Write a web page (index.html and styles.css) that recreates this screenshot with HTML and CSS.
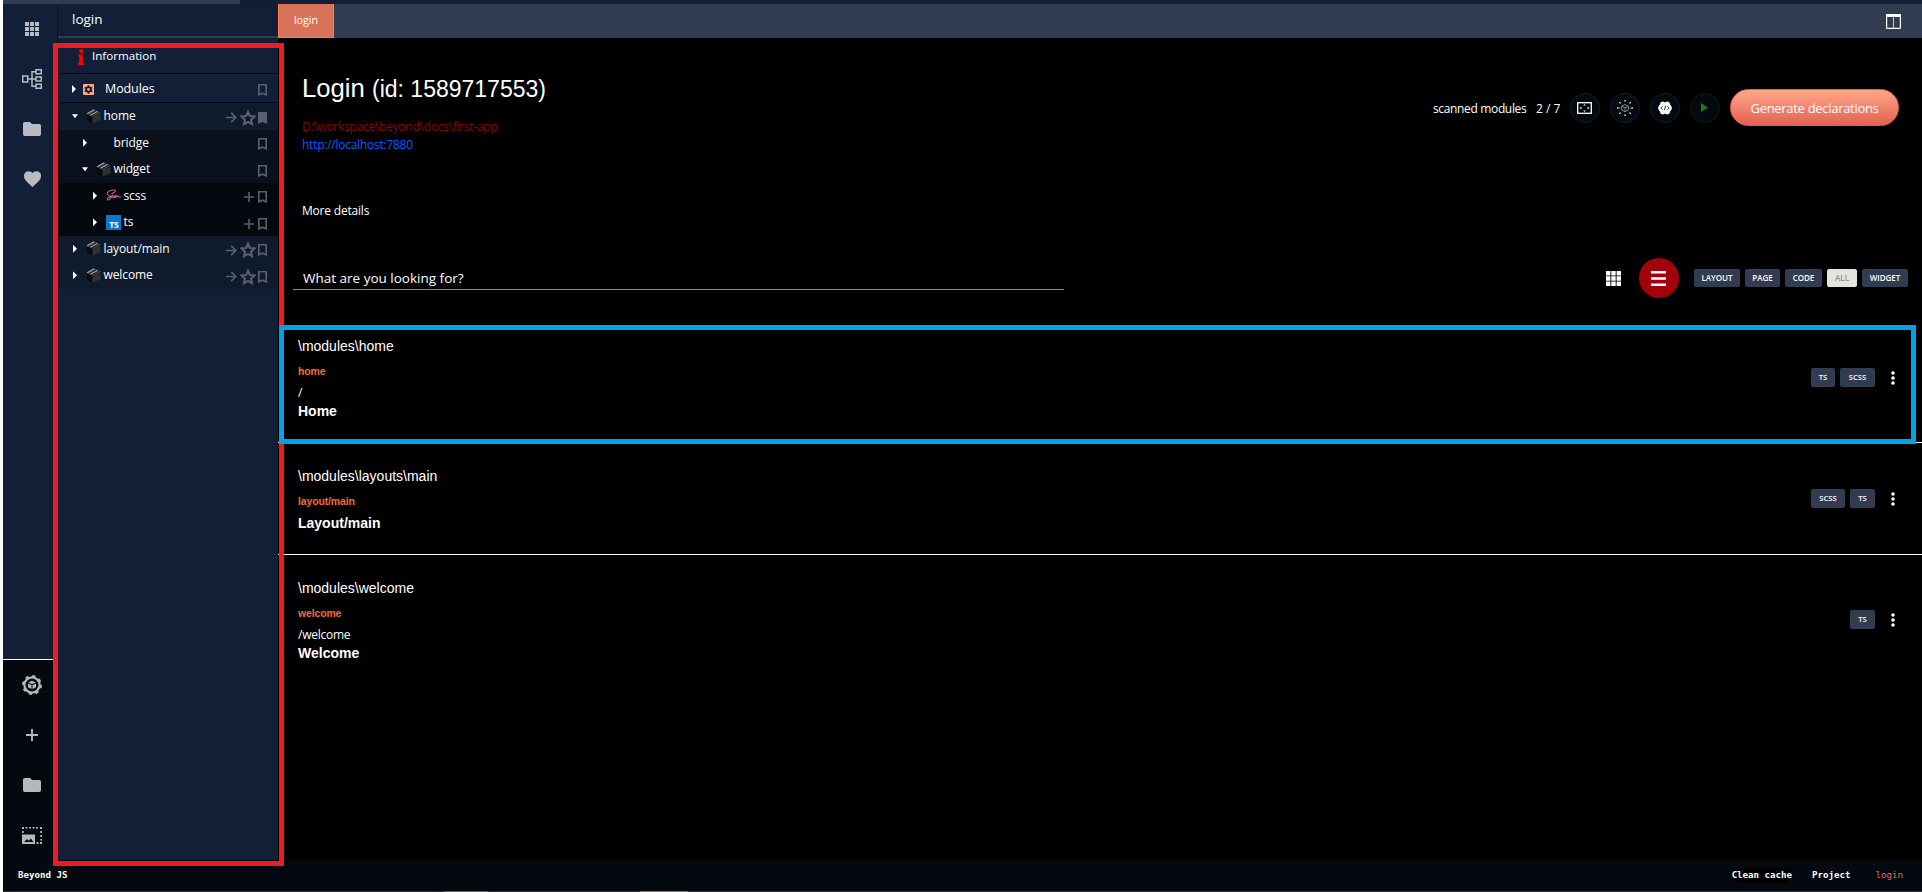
FILE: index.html
```html
<!DOCTYPE html>
<html lang="en">
<head>
<meta charset="utf-8">
<title>login</title>
<link rel="stylesheet" href="styles.css">
</head>
<body>
<svg class="defs" width="0" height="0">
  <symbol id="box" viewBox="0 0 16 16"><path fill="#0a0a0b" d="M1 5.500l6 2.500v7.500l-6-3z"/><path fill="#303032" d="M7 8l8.500-2.500V12L7 15.500z"/><path fill="#666" d="M.5 5l8-4.500 7 3.500L7 8z"/><path stroke="#111" stroke-width="1.100" fill="none" d="M3 6.300L11 1.800M6.200 7.300l7.500-4"/><path stroke="#a5a5a5" stroke-width="1" fill="none" d="M1 5l7.500-4.300M4.700 6.500l7.500-4"/></symbol>
  <symbol id="mark" viewBox="0 0 9 12"><path fill="none" stroke="currentColor" stroke-width="1.600" d="M.8.8h7.400v10L4.500 9.200.8 10.800z"/></symbol>
  <symbol id="markfull" viewBox="0 0 9 12"><path fill="currentColor" d="M0 0h9v12L4.500 10 0 12z"/></symbol>
  <symbol id="star" viewBox="0 0 16 16"><path fill="none" stroke="currentColor" stroke-width="2.100" d="M8 1.800l1.900 4.200 4.600.5-3.400 3.100.9 4.600-4-2.300-4 2.300.9-4.600-3.400-3.100 4.600-.5z"/></symbol>
  <symbol id="arrow" viewBox="0 0 11 11"><path fill="none" stroke="currentColor" stroke-width="1.600" d="M0 5.500h9.800M5.200.9l4.600 4.600-4.600 4.600"/></symbol>
  <symbol id="plus" viewBox="0 0 10 10"><path fill="none" stroke="currentColor" stroke-width="1.600" d="M5 0v10M0 5h10"/></symbol>
  <symbol id="folder" viewBox="0 0 18 14"><path fill="currentColor" d="M1.800 0h5.200l2 2h7.200A1.800 1.800 0 0 1 18 3.800v8.400a1.800 1.800 0 0 1-1.800 1.800H1.800A1.800 1.800 0 0 1 0 12.200V1.800A1.800 1.800 0 0 1 1.800 0z"/></symbol>
  <symbol id="dots" viewBox="0 0 4 14"><g fill="#fff"><circle cx="2" cy="2" r="1.800"/><circle cx="2" cy="7" r="1.800"/><circle cx="2" cy="12" r="1.800"/></g></symbol>
</svg>
<div class="app">
  <div class="progress"><div class="progress-bar"></div></div>
  <div class="main">
    <nav class="rail">
      <div class="rail-top">
        <a class="rail-item"><svg width="14" height="14" viewBox="0 0 14 14" fill="currentColor"><path d="M0 0h4v4H0zM5 0h4v4H5zM10 0h4v4h-4zM0 5h4v4H0zM5 5h4v4H5zM10 5h4v4h-4zM0 10h4v4H0zM5 10h4v4H5zM10 10h4v4h-4z"/></svg></a>
        <a class="rail-item"><svg width="20" height="20" viewBox="0 0 20 20" fill="none" stroke="currentColor" stroke-width="1.500"><path d="M.7 7h5v6h-5zM14 .7h5.300v4H14zM14 8h5.300v4H14zM14 15.300h5.300v4H14zM6 10h8M14 2.700h-4v14.600h4"/></svg></a>
        <a class="rail-item"><svg width="18" height="14"><use href="#folder"/></svg></a>
        <a class="rail-item"><svg width="17" height="16" viewBox="0 0 17 16" fill="currentColor"><path d="M8.500 16L7.300 14.900C3 11 0 8.300 0 4.900A4.500 4.500 0 0 1 4.600.2c1.500 0 3 .7 3.900 1.900C9.400.9 10.900.2 12.400.2A4.500 4.500 0 0 1 17 4.900c0 3.400-3 6.100-7.300 10z"/></svg></a>
      </div>
      <div class="rail-bottom">
        <a class="rail-item"><svg width="20" height="20" viewBox="0 0 20 20"><circle cx="10" cy="10" r="7.600" fill="none" stroke="currentColor" stroke-width="2.200"/><circle cx="10" cy="10" r="9" fill="none" stroke="currentColor" stroke-width="2" stroke-dasharray="3.200 3.870"/><path fill="currentColor" d="M10 5.800l3.800 1.600L10 9 6.200 7.400zM6 8.400l3.500 1.500v4L6 12.300zM14 8.400l-3.500 1.500v4l3.500-1.600z"/></svg></a>
        <a class="rail-item"><svg width="12" height="12" viewBox="0 0 12 12"><path stroke="currentColor" stroke-width="1.900" d="M6 0v12M0 6h12"/></svg></a>
        <a class="rail-item"><svg width="18" height="14"><use href="#folder"/></svg></a>
        <a class="rail-item"><svg width="20" height="17" viewBox="0 0 20 17" fill="currentColor"><path d="M0 0h2v2H0zM3.500 0h2v1.600h-2zM7 0h2v1.600H7zM10.500 0h2v1.600h-2zM14 0h2v1.600h-2zM18 0h2v2h-2zM0 4h1.700v2H0zM18.300 4H20v2h-1.700zM18.300 8H20v2h-1.700zM18.300 12H20v1.500h-1.700zM18 15h2v2h-2zM14.500 15h2v2h-2z"/><path fill-rule="evenodd" d="M0 7.500h13V17H0zM2 15h9.500L8.800 11.500l-2 2.300L5 12z"/></svg></a>
      </div>
    </nav>
    <aside class="side">
      <header class="side-head">login</header>
      <div class="info"><svg width="6" height="16" viewBox="0 0 6 16" fill="#f00"><circle cx="3.300" cy="2.200" r="2.100"/><path d="M.3 5.500h4.500V14H6v2H0v-2h1.200V7.500H.3z"/></svg><span>Information</span></div>
      <div class="row modules"><i class="tri"></i><svg class="mod" width="11" height="11" viewBox="0 0 11 11"><rect width="11" height="11" rx="1" fill="#ffa789"/><circle cx="5.500" cy="5.500" r="2.300" fill="none" stroke="#14192a" stroke-width="1.800"/><path stroke="#14192a" stroke-width="1.500" d="M5.500 1.300v1.500M5.500 8.200v1.500M1.700 3.500l1.500.8M9.300 3.500l-1.500.8M1.700 7.500l1.500-.8M9.300 7.500l-1.500-.8"/></svg><span class="label">Modules</span><svg class="act" width="9" height="12"><use href="#mark"/></svg></div>
      <div class="row l1"><i class="tri down"></i><svg class="pic" width="15" height="15"><use href="#box"/></svg><span class="label">home</span><svg class="act" width="11" height="11"><use href="#arrow"/></svg><svg class="act" width="16" height="16"><use href="#star"/></svg><svg class="act" width="9" height="12"><use href="#markfull"/></svg></div>
      <div class="row l2"><i class="tri"></i><i class="pic"></i><span class="label">bridge</span><svg class="act" width="9" height="12"><use href="#mark"/></svg></div>
      <div class="row l2"><i class="tri down"></i><svg class="pic" width="15" height="15"><use href="#box"/></svg><span class="label">widget</span><svg class="act" width="9" height="12"><use href="#mark"/></svg></div>
      <div class="row l3"><i class="tri"></i><svg class="pic" width="15" height="15" viewBox="0 0 15 15" fill="none" stroke="#c65b90" stroke-width="1.100"><path d="M5.500 5.500C9 4.800 10.800 2.300 8 2 5 1.700 1 4 1.200 5.700c.2 1.500 3.300 2 3.300 4 0 2-3.500 3.200-3.300 1.500C1.400 9.500 5 8 6 7.500c-1.300 2.200.2 2.700 1 .8.500 2.200 1.300.2 1.800-.3-.5 2.200.4 2 1.200.2.200 2.200.8 0 1.500-.3 1 .2.600 1.500 3.300 1"/></svg><span class="label">scss</span><svg class="act add" width="10" height="10"><use href="#plus"/></svg><svg class="act" width="9" height="12"><use href="#mark"/></svg></div>
      <div class="row l3"><i class="tri"></i><svg class="pic" width="15" height="15" viewBox="0 0 15 15"><rect width="15" height="15" fill="#0877cc"/><text x="3.200" y="13" class="ts">TS</text></svg><span class="label">ts</span><svg class="act add" width="10" height="10"><use href="#plus"/></svg><svg class="act" width="9" height="12"><use href="#mark"/></svg></div>
      <div class="row l1"><i class="tri"></i><svg class="pic" width="15" height="15"><use href="#box"/></svg><span class="label">layout/main</span><svg class="act" width="11" height="11"><use href="#arrow"/></svg><svg class="act" width="16" height="16"><use href="#star"/></svg><svg class="act" width="9" height="12"><use href="#mark"/></svg></div>
      <div class="row l1"><i class="tri"></i><svg class="pic" width="15" height="15"><use href="#box"/></svg><span class="label">welcome</span><svg class="act" width="11" height="11"><use href="#arrow"/></svg><svg class="act" width="16" height="16"><use href="#star"/></svg><svg class="act" width="9" height="12"><use href="#mark"/></svg></div>
    </aside>
    <main class="work">
      <div class="tabs"><div class="tab">login</div><svg width="15" height="15" viewBox="0 0 15 15"><rect x=".6" y=".6" width="13.800" height="13.800" rx=".5" fill="none" stroke="#fff" stroke-width="1.200"/><path fill="#fff" d="M0 0h15v3H0z"/><path stroke="#c5c9d0" stroke-width="1" d="M7.500 3v11"/></svg></div>
      <section class="hero">
        <div class="hero-text">
          <h1>Login <small>(id: 1589717553)</small></h1>
          <div class="path">D:\workspace\beyond\docs\first-app</div>
          <div class="url">http://localhost:7880</div>
          <div class="more">More details</div>
        </div>
        <div class="hero-actions">
          <span class="scan">scanned modules</span><span class="count">2 / 7</span>
          <button class="round"><svg width="15" height="12" viewBox="0 0 15 12"><rect x=".7" y=".7" width="13.600" height="10.600" fill="none" stroke="#fff" stroke-width="1.300"/><path fill="#fff" d="M2.500 6l2-1.300v2.600zM12.500 6l-2-1.300v2.600zM7.500 2l1.200 1.400H6.300zM7.500 10l1.200-1.400H6.300z"/></svg></button>
          <button class="round"><svg width="16" height="16" viewBox="0 0 16 16"><path fill="none" stroke="#888" stroke-width="1" d="M8 4.500l3.300 1.700v3.800L8 11.700 4.700 10V6.200zM4.700 6.200L8 7.800l3.300-1.600M8 7.800v3.900M1 8h2.300M12.700 8H15M3 3l1.200 1.200M13 3l-1.200 1.200M3 13l1.200-1.200M13 13l-1.200-1.200"/><path fill="#ddd" d="M7.300 0h1.400v1.400H7.300zM7.300 14.600h1.400V16H7.300zM0 7.300h1.400v1.400H0zM14.600 7.300H16v1.400h-1.400zM2 2h1.300v1.300H2zM12.700 2H14v1.300h-1.300zM2 12.700h1.300V14H2zM12.700 12.700H14V14h-1.300z"/></svg></button>
          <button class="round"><svg width="14" height="14" viewBox="0 0 14 14"><path fill="#fff" d="M5 .5l2 1 2-1 2.500.7.3 2L13 4.500 14 7l-1 2.500-1.200 1.300-.3 2-2.500.7-2-1-2 1-2.500-.7-.3-2L1 9.500 0 7l1-2.500 1.200-1.300.3-2z"/><path fill="none" stroke="#222" stroke-width=".9" d="M4.600 5.200L2.800 7l1.800 1.800M9.400 5.200L11.200 7 9.400 8.800M7.700 4.900L6.300 9.100"/></svg></button>
          <button class="round run"><svg width="7" height="9" viewBox="0 0 7 9"><path fill="#098509" d="M0 0l7 4.500L0 9z"/></svg></button>
          <button class="generate">Generate declarations</button>
        </div>
      </section>
      <section class="filters">
        <div class="search">What are you looking for?</div>
        <div class="filter-tools">
          <svg class="grid-icon" width="15" height="15" viewBox="0 0 15 15" fill="#fff"><path d="M0 0h4.400v4.400H0zM5.300 0h4.400v4.400H5.300zM10.600 0H15v4.400h-4.400zM0 5.300h4.400v4.400H0zM5.300 5.300h4.400v4.400H5.300zM10.600 5.300H15v4.400h-4.400zM0 10.600h4.400V15H0zM5.300 10.600h4.400V15H5.300zM10.600 10.600H15V15h-4.400z"/></svg>
          <button class="list-button"><svg width="15" height="15" viewBox="0 0 15 15" fill="#fff"><path d="M0 0h15v2.600H0zM0 6.200h15v2.600H0zM0 12.400h15V15H0z"/></svg></button>
          <div class="chips"><span class="chip w46">LAYOUT</span><span class="chip w35">PAGE</span><span class="chip w37">CODE</span><span class="chip w30 active">ALL</span><span class="chip w46">WIDGET</span></div>
        </div>
      </section>
      <section class="list">
        <article class="item">
          <div class="item-text"><div class="dir">\modules\home</div><div class="name">home</div><div class="route">/</div><div class="title">Home</div></div>
          <div class="item-tools"><span class="chip w24">TS</span><span class="chip w35">SCSS</span><svg width="4" height="14"><use href="#dots"/></svg></div>
        </article>
        <article class="item short">
          <div class="item-text"><div class="dir">\modules\layouts\main</div><div class="name">layout/main</div><div class="title">Layout/main</div></div>
          <div class="item-tools"><span class="chip w34">SCSS</span><span class="chip w25">TS</span><svg width="4" height="14"><use href="#dots"/></svg></div>
        </article>
        <article class="item last">
          <div class="item-text"><div class="dir">\modules\welcome</div><div class="name">welcome</div><div class="route">/welcome</div><div class="title">Welcome</div></div>
          <div class="item-tools"><span class="chip w25">TS</span><svg width="4" height="14"><use href="#dots"/></svg></div>
        </article>
      </section>
    </main>
  </div>
  <footer class="status"><span>Beyond JS</span><span class="clean">Clean cache</span><span class="project">Project</span><span class="current">login</span></footer>
  <div class="taskbar"><i class="task-a"></i><i class="task-b"></i></div>
</div>
<div class="outline-red"></div>
<div class="outline-blue"></div>
</body>
</html>
```
FILE: styles.css
```css
* { box-sizing: border-box; }
body { margin: 0; background: #000; color: #fff; font-family: "Open Sans", "Noto Sans", sans-serif; font-size: 12px; overflow: hidden; }
svg { display: block; flex: none; }
.defs { position: absolute; }
button { border: 0; padding: 0; color: #fff; font-family: inherit; }
.app { width: 1922px; height: 892px; border-left: 3px solid #fff; display: flex; flex-direction: column; }
.progress { height: 4px; background: #121e36; flex: none; }
.progress-bar { width: 237px; height: 4px; background: #323c50; }
.main { display: flex; height: 856px; }

.rail { width: 54px; display: flex; flex-direction: column; color: #b8bbc3; }
.rail-top { height: 656px; background: #131f37; }
.rail-bottom { flex: 1; border-top: 1px solid #fff; background: #04080f; color: #b8b8b8; }
.rail-item { height: 50px; display: flex; align-items: center; justify-content: center; padding-left: 4px; }

.side { width: 221px; background: #131f37; border-left: 1px solid #0b1424; }
.side-head { height: 34px; border-bottom: 2px solid #323c50; padding-left: 14px; font-size: 13.500px; line-height: 31px; }
.info { height: 36px; border-bottom: 1px solid #060a12; display: flex; align-items: flex-start; padding: 11px 0 0 20px; gap: 8px; line-height: 15px; font-size: 11.600px; }
.info span { margin-top: -1px; }
.row { height: 26.500px; display: flex; align-items: center; padding-right: 11px; gap: 3px; color: #5a606b; font-size: 12px; }
.label { flex: 1; color: #fff; line-height: 20px; white-space: nowrap; letter-spacing: -.1px; margin-left: -.5px; }
.act { margin-top: 3px; }
.act + .act { margin-left: -.5px; }
.act.add { margin-right: 2px; }
.tri { width: 6px; height: 8px; background: #fff; clip-path: polygon(1px 0, 5px 4px, 1px 8px); margin-right: 5px; flex: none; }
.tri.down { clip-path: polygon(0 2px, 6px 2px, 3px 6px); }
.pic { width: 15px; height: 15px; flex: none; }
.modules { height: 29px; border-bottom: 1px solid #060a12; padding-left: 13px; font-size: 12.500px; gap: 0; padding-top: 2px; }
.modules .mod { margin: 0 11.500px 0 1px; }
.modules .act { margin-top: 1px; }
.l1 { background: #0f1a2c; padding-left: 14px; }
.l2 { background: #0b101d; padding-left: 24px; }
.l3 { background: #04080f; padding-left: 34px; }
.ts { font: bold 8.500px "Open Sans", sans-serif; fill: #fff; }

.work { flex: 1; background: #000; }
.tabs { height: 34px; background: #323c50; display: flex; justify-content: space-between; align-items: center; padding-right: 21px; }
.tab { width: 56px; height: 34px; background: #d87258; border: 1px solid #ff7d4f; border-top: 0; text-align: center; font-size: 10.700px; line-height: 33px; }
.hero { height: 215px; padding-left: 24px; display: flex; justify-content: space-between; }
h1 { margin: 0; padding-top: 35px; font: 25.700px/30px "Liberation Sans", Arial, sans-serif; }
h1 small { font-size: 23px; }
.path { color: #8c0009; margin-top: 14px; font-size: 12px; line-height: 18px; letter-spacing: -.27px; }
.url { color: #0d5bff; line-height: 18px; font-size: 12px; letter-spacing: -.25px; }
.more { margin-top: 48px; line-height: 18px; font-size: 12px; letter-spacing: -.2px; }
.hero-actions { display: flex; align-items: center; height: 37px; margin-top: 51px; padding-right: 23px; }
.scan { width: 103px; padding-top: 2px; letter-spacing: -.35px; white-space: nowrap; }
.count { width: 34px; padding-top: 2px; }
.round { width: 30px; height: 30px; border-radius: 15px; border: 1px solid #121e36; background: #04080f; margin-right: 10px; display: flex; align-items: center; justify-content: center; }
.round svg { margin-right: 1px; }
.run { border-color: #08210f; }
.generate { width: 169px; height: 37px; border-radius: 19px; border: 1px solid #e2604f; background: linear-gradient(#ffa789, #e36152); font-size: 13px; letter-spacing: -.3px; padding-top: 1px; }
.filters { height: 60px; padding-left: 15px; display: flex; justify-content: space-between; align-items: flex-start; }
.search { width: 771px; height: 37px; border-bottom: 1px solid #8a8a8a; padding: 16px 0 0 10px; font-size: 13.500px; line-height: 18px; }
.filter-tools { display: flex; align-items: center; height: 40px; margin-top: 5px; padding-right: 14px; }
.grid-icon { margin-right: 18px; }
.list-button { width: 40px; height: 40px; border-radius: 50%; background: #a2000b; display: flex; align-items: center; justify-content: center; margin-right: 15px; }
.list-button svg { margin-right: 1px; }
.chips { display: flex; gap: 5px; }
.chip { height: 18px; line-height: 18px; border-radius: 2px; background: #323c50; text-align: center; font-family: "Open Sans", "Noto Sans", sans-serif; font-size: 8px; font-weight: 600; }
.active { background: #e4e5dc; color: #8b9093; }
.w24 { width: 24px; } .w25 { width: 25px; } .w30 { width: 30px; } .w34 { width: 34px; } .w35 { width: 35px; } .w37 { width: 37px; } .w46 { width: 46px; }

.item { height: 130px; border-bottom: 1px solid #fff; padding: 24px 27px 0 20px; display: flex; justify-content: space-between; font-family: "Liberation Sans", Arial, sans-serif; }
.short { height: 112px; }
.last { border-bottom-color: transparent; }
.dir { font-size: 14px; line-height: 18px; }
.name { font-size: 10.500px; font-weight: bold; letter-spacing: -.15px; line-height: 14px; margin-top: 9px; color: #f26a43; }
.route { font: 12px/18px "Open Sans", "Noto Sans", sans-serif; letter-spacing: -.25px; margin-top: 6px; }
.title { font-size: 14px; font-weight: bold; line-height: 18px; }
.short .title { margin-top: 6px; }
.item-tools { display: flex; align-items: center; height: 19px; margin-top: 31px; gap: 5px; }
.short .item-tools { margin-top: 22px; }
.item-tools .chip { height: 19px; line-height: 18px; font-size: 7.700px; }
.item-tools svg { margin-left: 11px; }

.status { height: 31px; background: #04080f; display: flex; align-items: center; padding: 0 19px 0 15px; font: bold 9.150px/15px "DejaVu Sans Mono", monospace; padding-bottom: 1px; }
.clean { margin-left: auto; background: #000; border-radius: 7px; }
.project { margin-left: 20px; }
.current { margin-left: 25px; color: #f0684a; font-weight: normal; }
.taskbar { height: 1px; background: #20333c; display: flex; }
.task-a { width: 44px; margin-left: 441px; background: #626766; }
.task-b { width: 48px; margin-left: 152px; background: #b06a35; }
.outline-red { position: absolute; left: 53px; top: 43px; width: 231px; height: 823px; border: 5px solid #ed1c24; }
.outline-blue { position: absolute; left: 279px; top: 325px; width: 1637px; height: 119px; border: 5px solid #00a2e8; }
```
